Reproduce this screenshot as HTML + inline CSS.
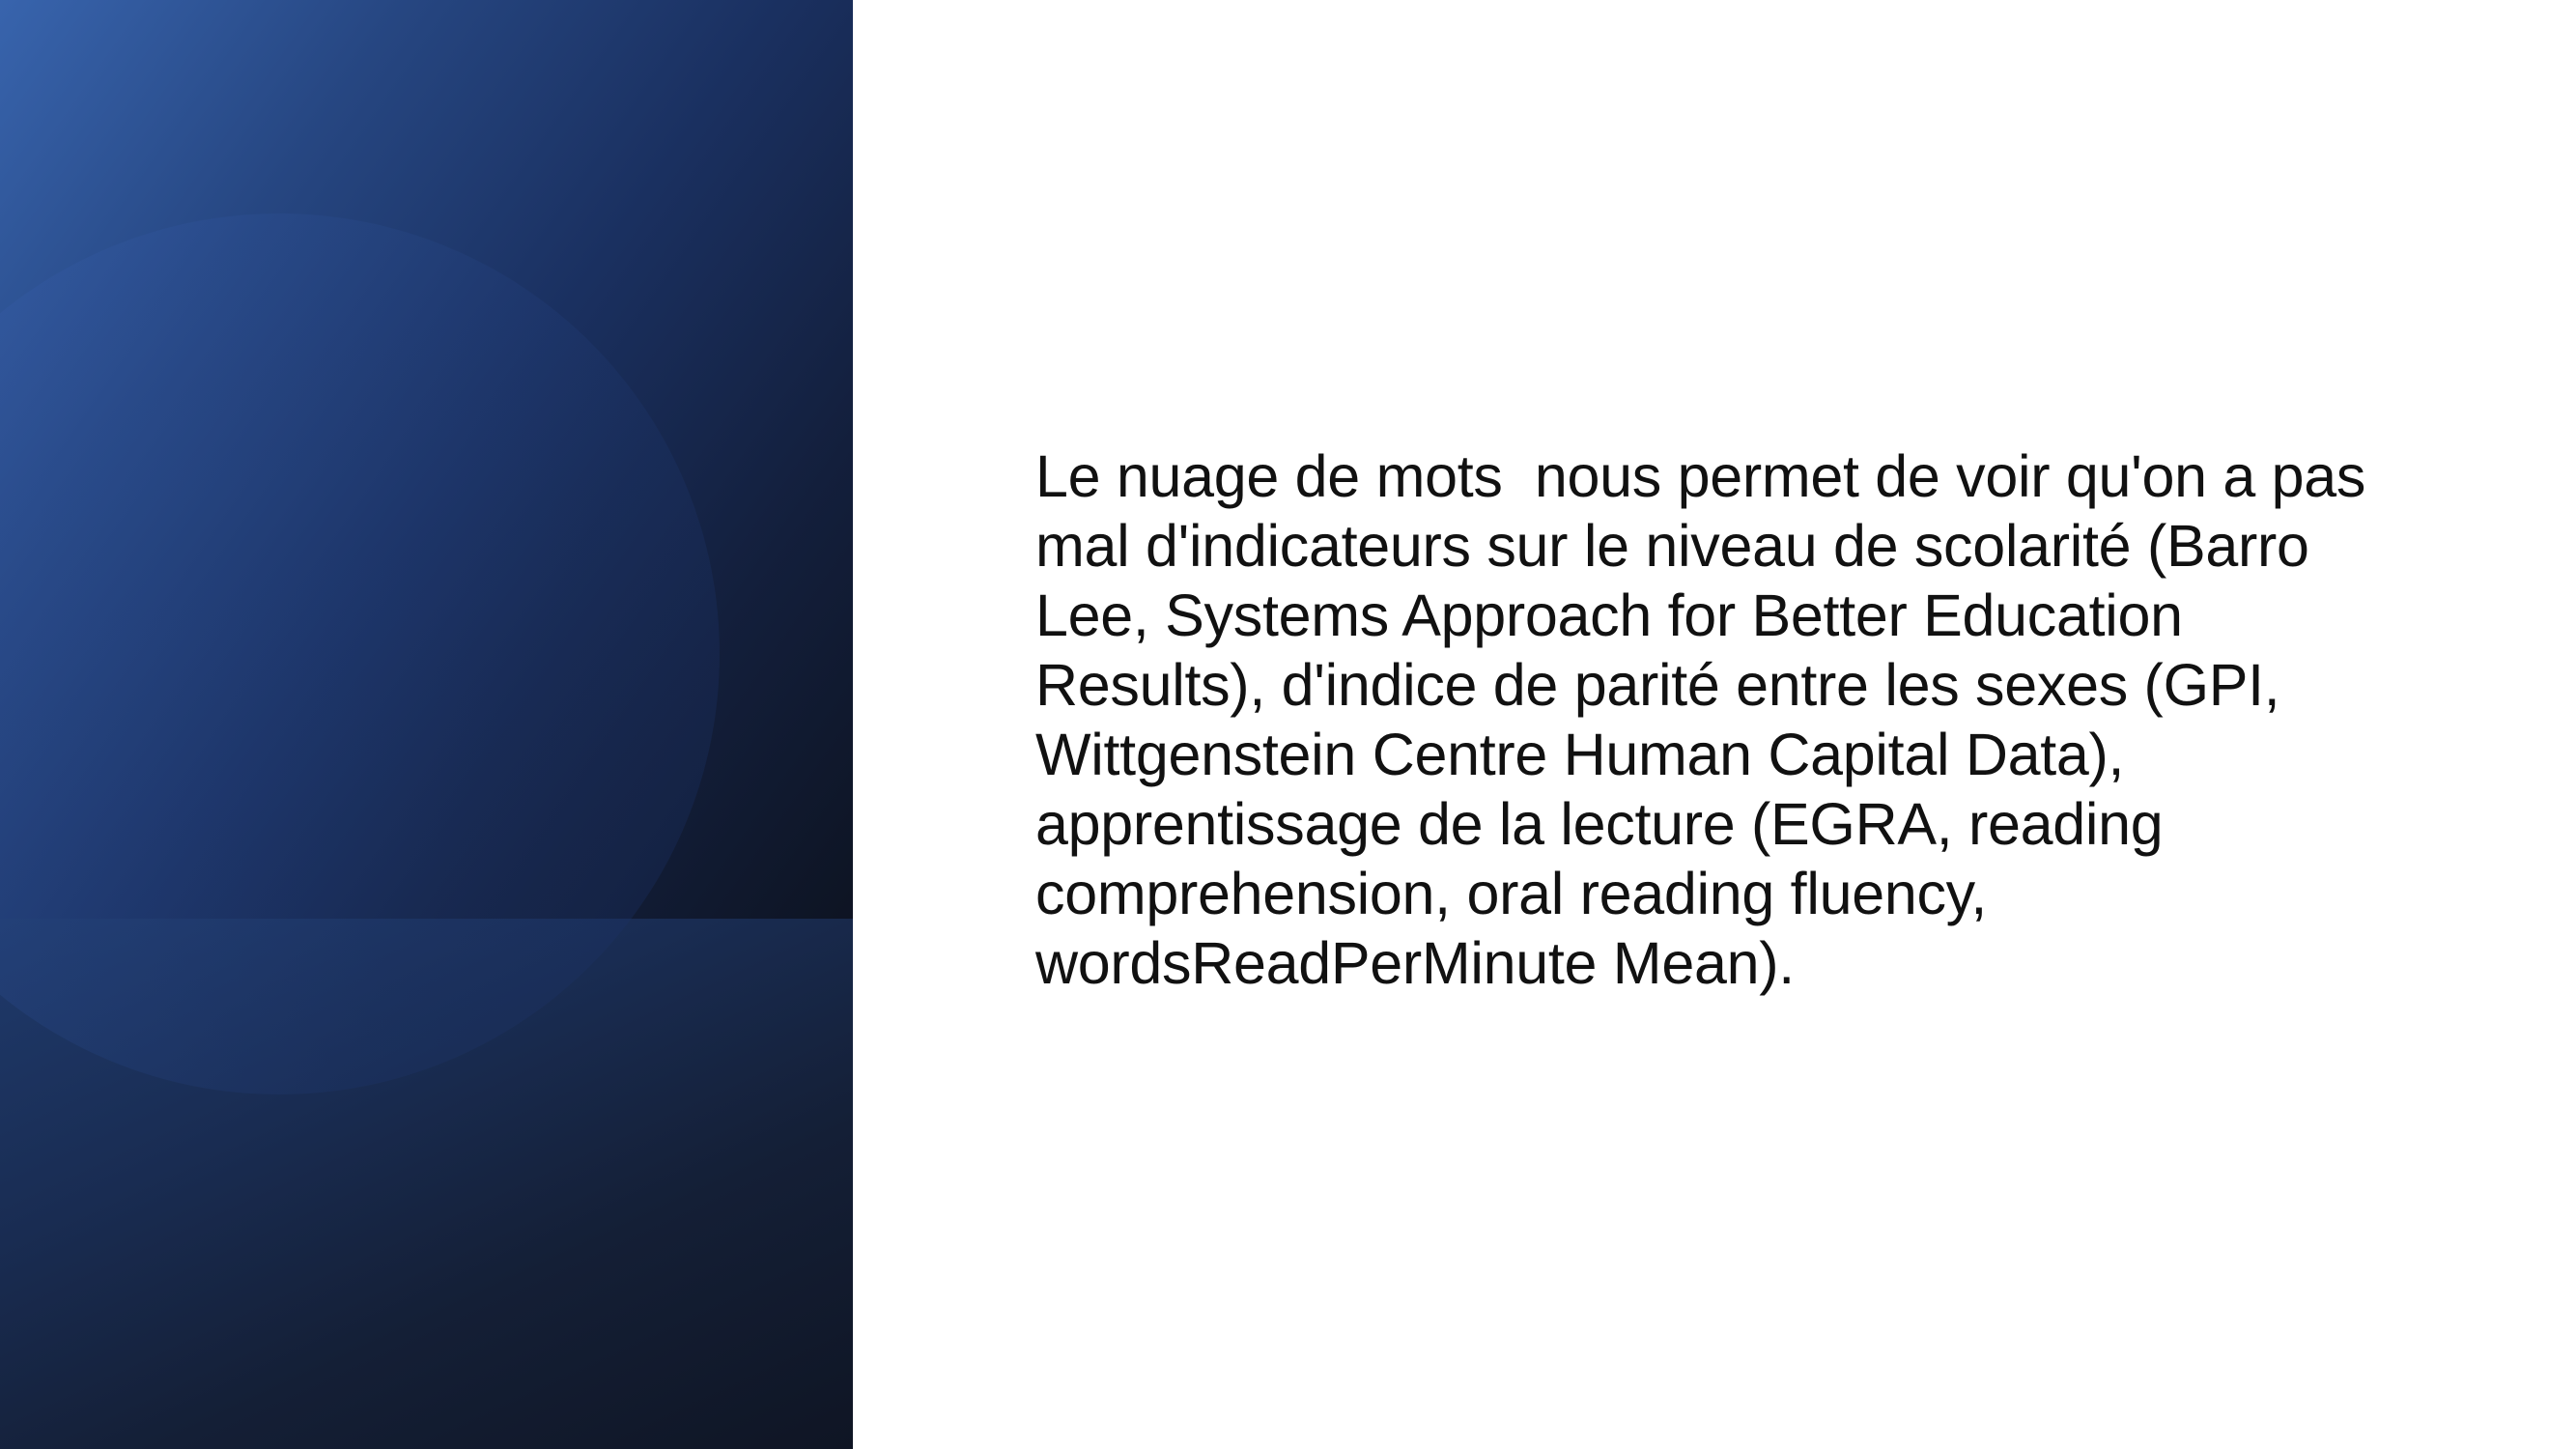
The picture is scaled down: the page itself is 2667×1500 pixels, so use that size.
<!DOCTYPE html>
<html><head><meta charset="utf-8"><style>
html,body{margin:0;padding:0;width:2667px;height:1500px;overflow:hidden;background:#fff;}
.left{position:absolute;left:0;top:0;width:883px;height:1500px;overflow:hidden;
background:linear-gradient(125deg,#3864ad 0%,#264681 22%,#1a3060 42%,#131f3c 62%,#0c111c 85%,#0a0e18 100%);}
.bottom{position:absolute;left:0;top:951px;width:883px;height:549px;
background:linear-gradient(155deg,#1f3a6c 0%,#192c52 35%,#141f36 65%,#0f1524 100%);}
.circle{position:absolute;left:-167px;top:221px;width:912px;height:912px;border-radius:50%;
background:linear-gradient(115deg,rgba(60,100,180,0.35) 0%,rgba(45,80,150,0.3) 35%,rgba(30,55,110,0.3) 70%,rgba(25,45,95,0.35) 100%);}
.text{position:absolute;left:1072px;top:457px;font-family:"Liberation Sans",sans-serif;font-size:61px;line-height:72px;color:#111;white-space:nowrap;letter-spacing:-0.3px;}
</style></head><body>
<div class="left"><div class="bottom"></div><div class="circle"></div></div>
<div class="text">Le nuage de mots&nbsp; nous permet de voir qu'on a pas<br>mal d'indicateurs sur le niveau de scolarité (Barro<br>Lee, Systems Approach for Better Education<br>Results), d'indice de parité entre les sexes (GPI,<br>Wittgenstein Centre Human Capital Data),<br>apprentissage de la lecture (EGRA, reading<br>comprehension, oral reading fluency,<br>wordsReadPerMinute Mean).</div>
</body></html>
